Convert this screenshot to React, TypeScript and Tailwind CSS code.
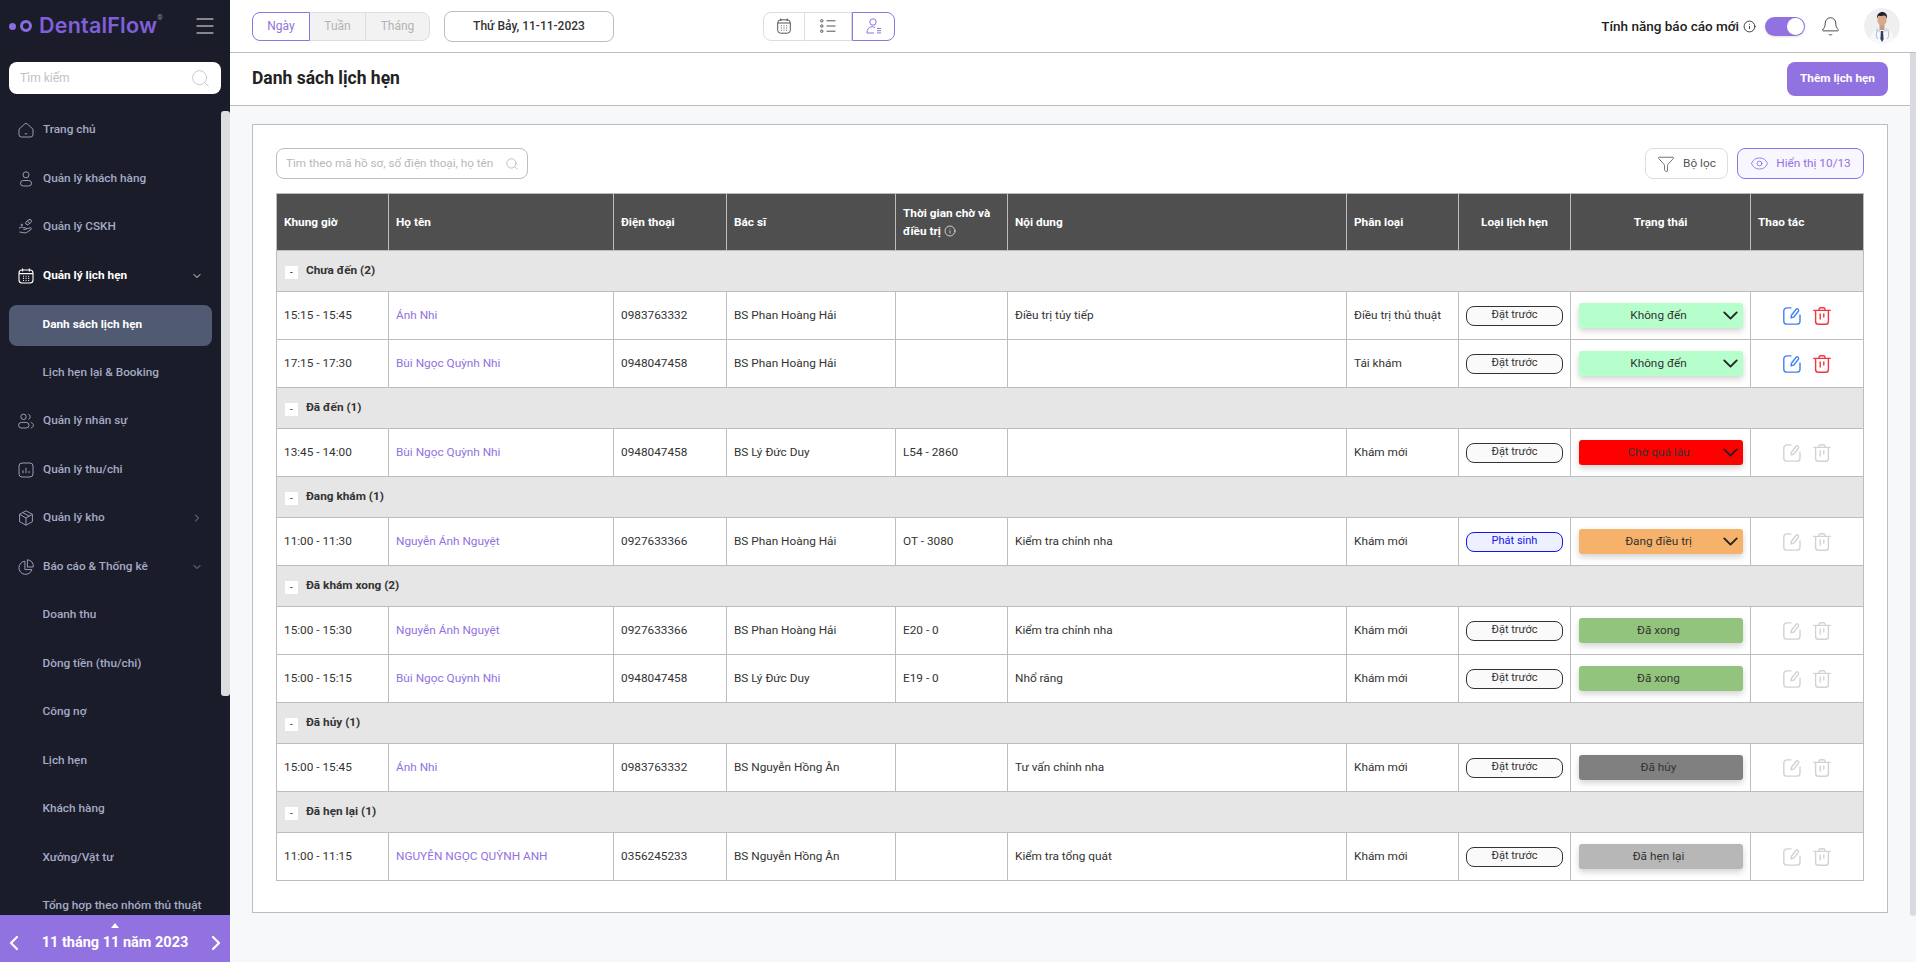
import React from "react";
import { ChevronDown, ChevronRight, ChevronLeft, Search, Menu, Eye, Filter, Bell, Info } from "lucide-react";

type Row = {
  time: string;
  name: string;
  phone: string;
  doctor: string;
  wait: string;
  note: string;
  kind: string;
  booking: string;
  status: string;
  statusClass: string;
  arrow: boolean;
  active: boolean;
};

type Group = { title: string; rows: Row[] };

const groups: Group[] = [
  {
    title: "Chưa đến (2)",
    rows: [
      { time: "15:15 - 15:45", name: "Ánh Nhi", phone: "0983763332", doctor: "BS Phan Hoàng Hải", wait: "", note: "Điều trị tủy tiếp", kind: "Điều trị thủ thuật", booking: "Đặt trước", status: "Không đến", statusClass: "bg-[#b6ffcd]", arrow: true, active: true },
      { time: "17:15 - 17:30", name: "Bùi Ngọc Quỳnh Nhi", phone: "0948047458", doctor: "BS Phan Hoàng Hải", wait: "", note: "", kind: "Tái khám", booking: "Đặt trước", status: "Không đến", statusClass: "bg-[#b6ffcd]", arrow: true, active: true },
    ],
  },
  {
    title: "Đã đến (1)",
    rows: [
      { time: "13:45 - 14:00", name: "Bùi Ngọc Quỳnh Nhi", phone: "0948047458", doctor: "BS Lý Đức Duy", wait: "L54 - 2860", note: "", kind: "Khám mới", booking: "Đặt trước", status: "Chờ quá lâu", statusClass: "bg-[#ff0000]", arrow: true, active: false },
    ],
  },
  {
    title: "Đang khám (1)",
    rows: [
      { time: "11:00 - 11:30", name: "Nguyễn Ánh Nguyệt", phone: "0927633366", doctor: "BS Phan Hoàng Hải", wait: "OT - 3080", note: "Kiểm tra chỉnh nha", kind: "Khám mới", booking: "Phát sinh", status: "Đang điều trị", statusClass: "bg-[#f6b26b]", arrow: true, active: false },
    ],
  },
  {
    title: "Đã khám xong (2)",
    rows: [
      { time: "15:00 - 15:30", name: "Nguyễn Ánh Nguyệt", phone: "0927633366", doctor: "BS Phan Hoàng Hải", wait: "E20 - 0", note: "Kiểm tra chỉnh nha", kind: "Khám mới", booking: "Đặt trước", status: "Đã xong", statusClass: "bg-[#93c47d]", arrow: false, active: false },
      { time: "15:00 - 15:15", name: "Bùi Ngọc Quỳnh Nhi", phone: "0948047458", doctor: "BS Lý Đức Duy", wait: "E19 - 0", note: "Nhổ răng", kind: "Khám mới", booking: "Đặt trước", status: "Đã xong", statusClass: "bg-[#93c47d]", arrow: false, active: false },
    ],
  },
  {
    title: "Đã hủy (1)",
    rows: [
      { time: "15:00 - 15:45", name: "Ánh Nhi", phone: "0983763332", doctor: "BS Nguyễn Hồng Ân", wait: "", note: "Tư vấn chỉnh nha", kind: "Khám mới", booking: "Đặt trước", status: "Đã hủy", statusClass: "bg-[#808080]", arrow: false, active: false },
    ],
  },
  {
    title: "Đã hẹn lại (1)",
    rows: [
      { time: "11:00 - 11:15", name: "NGUYỄN NGỌC QUỲNH ANH", phone: "0356245233", doctor: "BS Nguyễn Hồng Ân", wait: "", note: "Kiểm tra tổng quát", kind: "Khám mới", booking: "Đặt trước", status: "Đã hẹn lại", statusClass: "bg-[#b7b7b7]", arrow: false, active: false },
    ],
  },
];

// Sidebar icons, all on a 16 box
const HomeIcon = () => (
  <svg width="16" height="16" viewBox="0 0 16 16" fill="none" stroke="currentColor" strokeWidth="0.9">
    <path d="M1 7.2 6.4 2.2a2.3 2.3 0 0 1 3.2 0L15 7.2v5.3a2.5 2.5 0 0 1-2.5 2.5h-9A2.5 2.5 0 0 1 1 12.5z" />
    <path d="M6.7 11.8h2.6" />
  </svg>
);
const UserIcon = () => (
  <svg width="16" height="16" viewBox="0 0 16 16" fill="none" stroke="currentColor" strokeWidth="0.9">
    <circle cx="8" cy="3.8" r="3" />
    <rect x="2.5" y="9.5" width="11" height="5.5" rx="2.75" />
  </svg>
);
const HandIcon = () => (
  <svg width="16" height="16" viewBox="0 0 16 16" fill="none" stroke="currentColor" strokeWidth="0.9">
    <path d="M1 9.2c1.5-1.2 3-1.2 4.4-.4h2.2c.9 0 .9 1.5 0 1.5H5.4M8 10l4.4-1.2c1.2-.2 1.6 1 .7 1.6l-4 2.8c-1.3.8-2.8.9-4.2.4L1.5 13" />
    <rect x="7.4" y="1.4" width="6.4" height="3.4" rx="1.7" transform="rotate(-38 10.6 3.1)" />
    <path d="M9.6 1.9l1.9 2.5" />
    <circle cx="3.8" cy="6" r="0.8" />
  </svg>
);
const CalendarIcon = () => (
  <svg width="16" height="16" viewBox="0 0 16 16" fill="none" stroke="currentColor" strokeWidth="1.1">
    <rect x="1" y="2" width="14" height="13" rx="3" />
    <path d="M4.6 .6v2.8M11.4 .6v2.8M1 5.6h14" />
    <path d="M5 8.3h.9M7.6 8.3h.9M10.2 8.3h.9M5 10.4h.9M7.6 10.4h.9M10.2 10.4h.9M5 12.5h.9M7.6 12.5h.9M10.2 12.5h.9" />
  </svg>
);
const UsersIcon = () => (
  <svg width="16" height="16" viewBox="0 0 16 16" fill="none" stroke="currentColor" strokeWidth="0.9">
    <circle cx="5.5" cy="3.8" r="2.7" />
    <rect x="0.6" y="9.4" width="10.4" height="5.6" rx="2.8" />
    <path d="M10.4 1.2a2.8 2.8 0 0 1 0 5.2M12.8 9.6c1.5.3 2.6 1.4 2.6 2.7s-1.1 2.4-2.6 2.7" />
  </svg>
);
const ChartIcon = () => (
  <svg width="16" height="16" viewBox="0 0 16 16" fill="none" stroke="currentColor" strokeWidth="0.9">
    <rect x="1" y="1" width="14" height="14" rx="3" />
    <path d="M5 8.2v3M8 5.8v5.4M11 9v2.2" />
  </svg>
);
const BoxIcon = () => (
  <svg width="16" height="16" viewBox="0 0 16 16" fill="none" stroke="currentColor" strokeWidth="0.9">
    <path d="M8 .8l6.4 3.5v7.4L8 15.2l-6.4-3.5V4.3z" strokeLinejoin="round" />
    <path d="M1.6 4.3 8 8l6.4-3.7M8 8v7.2M4.8 2.6l6.4 3.6" />
  </svg>
);
const PieIcon = () => (
  <svg width="16" height="16" viewBox="0 0 16 16" fill="none" stroke="currentColor" strokeWidth="0.9">
    <path d="M6.9 2.2a6.6 6.6 0 1 0 7 8.4H6.9z" />
    <path d="M9.4 .8a6 6 0 0 1 5.8 7.2H9.4z" />
  </svg>
);

const EditIcon = ({ className }: { className: string }) => (
  <svg className={className} width="18" height="18" viewBox="0 0 18 18" fill="none" stroke="currentColor" strokeWidth="1.4" strokeLinecap="round">
    <path d="M8 .9H4a3.2 3.2 0 0 0-3.2 3.2v9.8A3.2 3.2 0 0 0 4 17.1h9.8a3.2 3.2 0 0 0 3.2-3.2V8" />
    <path d="M8 10.8l.5-2.6 4.6-5.9a1.5 1.5 0 0 1 2.3 1.9l-4.6 5.9z" strokeLinejoin="round" />
  </svg>
);
const TrashIcon = ({ className }: { className: string }) => (
  <svg className={className} width="18" height="18" viewBox="0 0 18 18" fill="none" stroke="currentColor" strokeWidth="1.4" strokeLinecap="round">
    <path d="M.8 3.4h16.4M6 3.2V2.4A1.6 1.6 0 0 1 7.6 .8h2.8A1.6 1.6 0 0 1 12 2.4v.8" />
    <path d="M2.6 3.6v10.8a2.8 2.8 0 0 0 2.8 2.8h7.2a2.8 2.8 0 0 0 2.8-2.8V3.6" />
    <path d="M7.2 7v5M10.8 7v3" />
  </svg>
);

const Avatar = () => (
  <svg width="36" height="36" viewBox="0 0 36 36" className="rounded-full">
    <circle cx="18" cy="18" r="18" fill="#efefef" />
    <path d="M5 36c1-10 5-15 13-16 8 1 12 6 13 16z" fill="#f7f8fb" />
    <path d="M13 20l4 3.5 1 .2 1-.2 4-3.5 1 2-5 3-1.5 9-1-9-4-3z" fill="#cfd3e0" />
    <path d="M17 23h2l.6 8-1.5 3-1.7-3z" fill="#2f3f63" />
    <path d="M13 22c-1 5-1 7 1 9M24 22c1 5 1 7-1 9" stroke="#8e96ad" strokeWidth="0.7" fill="none" />
    <rect x="15.5" y="15" width="5" height="7" fill="#c79b7f" />
    <ellipse cx="18" cy="12" rx="4.6" ry="5.6" fill="#d8a98a" />
    <path d="M13 11c-.5-5 2.5-7 5.2-7 3 0 5.4 2 4.8 7-.6-2-1.4-3-2.6-3.4-1.8 .6-4 .6-5.8 .2-.9 .8-1.3 1.8-1.6 3.2z" fill="#1f2230" />
  </svg>
);

const navTop = "flex items-center h-[48.5px] pl-[18px] pr-[18px] shrink-0 text-[11.8px] font-medium text-[#a3abc6]";
const navSub = "flex items-center h-[48.5px] pl-[42.5px] shrink-0 text-[11.8px] font-medium text-[#a3abc6]";

const NavItem = ({ icon, label, chevron }: { icon: React.ReactNode; label: string; chevron?: "down" | "right" }) => (
  <div className={navTop}>
    <span className="w-[25px] shrink-0">{icon}</span>
    <span className="flex-1">{label}</span>
    {chevron === "down" && <ChevronDown size={12} strokeWidth={1.5} />}
    {chevron === "right" && <ChevronRight size={12} strokeWidth={1.5} />}
  </div>
);

const Sidebar = () => (
  <aside className="relative flex flex-col w-[230px] shrink-0 h-full bg-[#1b1c29]">
    <div className="flex items-center h-[52px] pl-[9px] pr-[13px] shrink-0">
      <span className="w-[7px] h-[7px] rounded-full bg-[#8a6be0]" />
      <span className="ml-[4px] w-[12px] h-[12px] rounded-full border-[3px] border-[#8a6be0]" />
      <span className="ml-[7px] font-['Inter',sans-serif] text-[21.5px] tracking-[0.2px] leading-none font-semibold text-[#8060da]">DentalFlow</span>
      <span className="self-start mt-[15px] text-[7px] leading-none text-[#8a8ea0]">®</span>
      <Menu className="ml-auto text-[#f2f2f2]" size={24} strokeWidth={1.2} />
    </div>
    <div className="shrink-0 pl-[9px] pr-[9px] pt-[10px]">
      <div className="flex items-center h-8 bg-white rounded-lg pl-[11px] pr-[10px] text-[12px] text-[#c2c2c2]">
        <span className="flex-1">Tìm kiếm</span>
        <Search size={21} strokeWidth={0.7} className="text-[#aaa]" />
      </div>
    </div>
    <nav className="flex-1 min-h-0 overflow-hidden pt-3 pr-[9px]">
      <NavItem icon={<HomeIcon />} label="Trang chủ" />
      <NavItem icon={<UserIcon />} label="Quản lý khách hàng" />
      <NavItem icon={<HandIcon />} label="Quản lý CSKH" />
      <div className="flex items-center h-[48.5px] pl-[18px] pr-[18px] shrink-0 text-[11.8px] font-bold text-white">
        <span className="w-[25px] shrink-0"><CalendarIcon /></span>
        <span className="flex-1">Quản lý lịch hẹn</span>
        <ChevronDown size={12} strokeWidth={1.8} />
      </div>
      <div className="flex items-center h-[40.5px] mx-[9px] mt-[5px] mb-[3px] pl-[33.5px] rounded-lg bg-[#505a73] text-[11.8px] font-bold text-white">Danh sách lịch hẹn</div>
      <div className={navSub}>Lịch hẹn lại &amp; Booking</div>
      <NavItem icon={<UsersIcon />} label="Quản lý nhân sự" />
      <NavItem icon={<ChartIcon />} label="Quản lý thu/chi" />
      <NavItem icon={<BoxIcon />} label="Quản lý kho" chevron="right" />
      <NavItem icon={<PieIcon />} label="Báo cáo & Thống kê" chevron="down" />
      <div className={navSub}>Doanh thu</div>
      <div className={navSub}>Dòng tiền (thu/chi)</div>
      <div className={navSub}>Công nợ</div>
      <div className={navSub}>Lịch hẹn</div>
      <div className={navSub}>Khách hàng</div>
      <div className={navSub}>Xưởng/Vật tư</div>
      <div className={navSub}>Tổng hợp theo nhóm thủ thuật</div>
    </nav>
    <div className="relative flex items-center justify-between h-[47px] shrink-0 bg-[#9172e0] px-[2px] pt-[9px] text-white">
      <ChevronLeft size={24} strokeWidth={2.2} />
      <span className="text-[14.5px] font-bold">11 tháng 11 năm 2023</span>
      <ChevronRight size={24} strokeWidth={2.2} />
      <span className="absolute left-[111px] top-[8px] w-0 h-0 border-x-[4px] border-x-transparent border-b-[5px] border-b-white" />
    </div>
    <div className="absolute right-0 top-[111px] w-[9px] h-[585px] rounded-[3px] bg-[#dcdde1]" />
  </aside>
);

const TopBar = () => (
  <header className="flex items-center h-[53px] shrink-0 pl-[22px] pr-4 bg-white border-b border-[#bdbdbd]">
    <div className="flex items-stretch h-[29px] text-[12px]">
      <div className="flex items-center justify-center w-[58px] rounded-l-lg border border-[#9172e0] text-[#9172e0] bg-white">Ngày</div>
      <div className="flex items-center justify-center w-[55px] border-y border-[#ddd] bg-[#f2f2f2] text-[#b3b3b3]">Tuần</div>
      <div className="flex items-center justify-center w-[65px] rounded-r-lg border border-[#ddd] bg-[#f2f2f2] text-[#b3b3b3]">Tháng</div>
    </div>
    <div className="flex items-center justify-center ml-[14px] w-[170px] h-[31px] rounded-lg border border-[#bdbdbd] text-[12px] font-medium text-[#333]">Thứ Bảy, 11-11-2023</div>
    <div className="flex items-stretch ml-[149px] h-[29px] text-[#555]">
      <div className="flex items-center justify-center w-[42px] rounded-l-lg border border-[#ddd]">
        <svg width="14" height="16" viewBox="0 0 14 16" fill="none" stroke="currentColor" strokeWidth="1">
          <rect x="0.7" y="1.8" width="12.6" height="13.4" rx="3" />
          <path d="M3.8 .6v2.4M10.2 .6v2.4M.7 5h12.6M3.8 7.8h1M6.5 7.8h1M9.2 7.8h1M3.8 10h1M6.5 10h1M9.2 10h1M3.8 12.2h1M6.5 12.2h1M9.2 12.2h1" />
        </svg>
      </div>
      <div className="flex items-center justify-center w-[47px] border-y border-r border-[#ddd]">
        <svg width="16" height="14" viewBox="0 0 16 14" fill="none" stroke="currentColor" strokeWidth="1">
          <circle cx="1.8" cy="1.8" r="1.2" />
          <circle cx="1.8" cy="7" r="1.2" />
          <circle cx="1.8" cy="12.2" r="1.2" />
          <path d="M6.5 1.8h9M6.5 7h9M6.5 12.2h9" />
        </svg>
      </div>
      <div className="flex items-center justify-center w-[43px] rounded-r-lg border border-[#9172e0] text-[#9172e0]">
        <svg width="16" height="16" viewBox="0 0 16 16" fill="none" stroke="currentColor" strokeWidth="1">
          <circle cx="7" cy="4" r="3.2" />
          <path d="M1 15c0-3.5 1.5-6 5-6.3 1.3 0 2.3 .3 3 .9M1 15h7M11 10.5h4M11 12.7h4M11 14.9h4" />
        </svg>
      </div>
    </div>
    <div className="flex items-center ml-auto">
      <span className="text-[13.5px] font-medium text-[#222]">Tính năng báo cáo mới</span>
      <Info size={13} strokeWidth={1.6} className="ml-[4px] text-[#222]" />
      <div className="flex items-center justify-end w-10 h-[19px] ml-[9px] pr-px rounded-full bg-[#9172e0] shadow-sm">
        <span className="w-[17px] h-[17px] rounded-full bg-white" />
      </div>
      <Bell size={21} strokeWidth={1} className="ml-[15px] text-[#333]" />
      <div className="ml-[23px]"><Avatar /></div>
    </div>
  </header>
);

const columnWidths = ["w-[112px]", "w-[225px]", "w-[113px]", "w-[169px]", "w-[112px]", "w-[339px]", "w-[112px]", "w-[112px]", "w-[180px]", "w-[113px]"];

const cell = "border border-[#bdbdbd] px-[7px] text-[11.8px] text-[#333]";
const head = "border border-[#bdbdbd] px-[7px] text-[11.8px] leading-[18px] font-bold text-white";

const BookingPill = ({ label }: { label: string }) =>
  label === "Phát sinh" ? (
    <div className="flex items-center justify-center h-5 mx-auto w-[97px] rounded-lg border border-[#1414f0] bg-[#eef0ff] text-[11px] text-[#1414f0]">{label}</div>
  ) : (
    <div className="flex items-center justify-center h-5 mx-auto w-[97px] rounded-lg border border-[#333] bg-[#fafafa] text-[11px] text-[#333]">{label}</div>
  );

const TableRow = ({ row }: { row: Row }) => (
  <tr className="h-12">
    <td className={cell}>{row.time}</td>
    <td className={cell}><span className="text-[#9172e0]">{row.name}</span></td>
    <td className={cell}>{row.phone}</td>
    <td className={cell}>{row.doctor}</td>
    <td className={cell}>{row.wait}</td>
    <td className={cell}>{row.note}</td>
    <td className={cell}>{row.kind}</td>
    <td className={cell}><BookingPill label={row.booking} /></td>
    <td className={cell}>
      <div className={`relative flex items-center justify-center h-[25px] mx-auto w-[164px] rounded-[3px] shadow-[0_3px_6px_rgba(0,0,0,0.18)] ${row.statusClass}`}>
        <span className="pr-1 text-[#333]">{row.status}</span>
        {row.arrow && <ChevronDown size={25} strokeWidth={1.8} className="absolute right-0 text-[#222]" />}
      </div>
    </td>
    <td className={cell}>
      <div className="flex items-center justify-center gap-3">
        <EditIcon className={row.active ? "text-[#3b82f6]" : "text-[#d2d2d2]"} />
        <TrashIcon className={row.active ? "text-[#f5333f]" : "text-[#d2d2d2]"} />
      </div>
    </td>
  </tr>
);

export default function App() {
  return (
    <div className="flex w-[1916px] h-[962px] overflow-hidden bg-[#f7f8fa] font-['Roboto',sans-serif]">
      <Sidebar />
      <div className="flex flex-col flex-1 min-w-0 h-full">
        <TopBar />
        <div className="flex flex-1 min-h-0">
          <main className="flex-1 min-w-0">
            <div className="flex items-center justify-between h-[53px] pl-[22px] pr-[22px] bg-white border-b border-[#bdbdbd]">
              <h1 className="-mt-px text-[17.5px] font-bold text-[#222]">Danh sách lịch hẹn</h1>
              <button className="w-[101px] h-[34px] rounded-lg bg-[#9172e0] text-[11.8px] font-bold text-white">Thêm lịch hẹn</button>
            </div>
            <div className="mx-[22px] mt-[18px] h-[789px] bg-white border border-[#bdbdbd] px-[23px] pt-[23px]">
              <div className="flex items-center justify-between h-[31px]">
                <div className="flex items-center w-[252px] h-full pl-[9px] pr-[8px] rounded-lg border border-[#bdbdbd] text-[11.7px] text-[#b8b8b8]">
                  <span className="flex-1 whitespace-nowrap">Tìm theo mã hồ sơ, số điện thoại, họ tên</span>
                  <Search size={14} strokeWidth={1} className="text-[#999]" />
                </div>
                <div className="flex items-center gap-[9px] h-full">
                  <button className="flex items-center justify-center gap-[8px] w-[83px] h-full rounded-lg border border-[#ddd] text-[11.8px] text-[#555]">
                    <Filter size={18} strokeWidth={1} className="text-[#444]" />
                    Bộ lọc
                  </button>
                  <button className="flex items-center justify-center gap-[7px] w-[127px] h-full rounded-lg border border-[#9172e0] bg-[#f8f6ff] text-[11.8px] text-[#9172e0]">
                    <Eye size={19} strokeWidth={1.1} />
                    Hiển thị 10/13
                  </button>
                </div>
              </div>
              <table className="table-fixed mt-[14px] w-[1587px] border-collapse">
                <colgroup>
                  {columnWidths.map((w, i) => (
                    <col key={i} className={w} />
                  ))}
                </colgroup>
                <thead>
                  <tr className="h-[57px] bg-[#4f4f4f]">
                    <th className={`${head} text-left`}>Khung giờ</th>
                    <th className={`${head} text-left`}>Họ tên</th>
                    <th className={`${head} text-left`}>Điện thoại</th>
                    <th className={`${head} text-left`}>Bác sĩ</th>
                    <th className={`${head} text-left`}>
                      Thời gian chờ và điều trị <Info size={12} strokeWidth={1.4} className="inline-block align-[-2px]" />
                    </th>
                    <th className={`${head} text-left`}>Nội dung</th>
                    <th className={`${head} text-left`}>Phân loại</th>
                    <th className={`${head} text-center`}>Loại lịch hẹn</th>
                    <th className={`${head} text-center`}>Trạng thái</th>
                    <th className={`${head} text-left`}>Thao tác</th>
                  </tr>
                </thead>
                <tbody>
                  {groups.map((group) => (
                    <React.Fragment key={group.title}>
                      <tr className="h-[41px] bg-[#e6e6e6]">
                        <td colSpan={10} className="border border-[#bdbdbd] pl-2 text-[11.8px] font-bold text-[#333]">
                          <div className="flex items-center">
                            <span className="flex items-center justify-center w-[13px] h-[13px] mt-[2px] mr-2 bg-white text-[10px] font-normal">-</span>
                            {group.title}
                          </div>
                        </td>
                      </tr>
                      {group.rows.map((row) => (
                        <TableRow key={row.time + row.name} row={row} />
                      ))}
                    </React.Fragment>
                  ))}
                </tbody>
              </table>
            </div>
          </main>
          <div className="w-[6px] h-[863px] shrink-0 rounded-b-[3px] bg-[#d9dadf]" />
        </div>
      </div>
    </div>
  );
}
